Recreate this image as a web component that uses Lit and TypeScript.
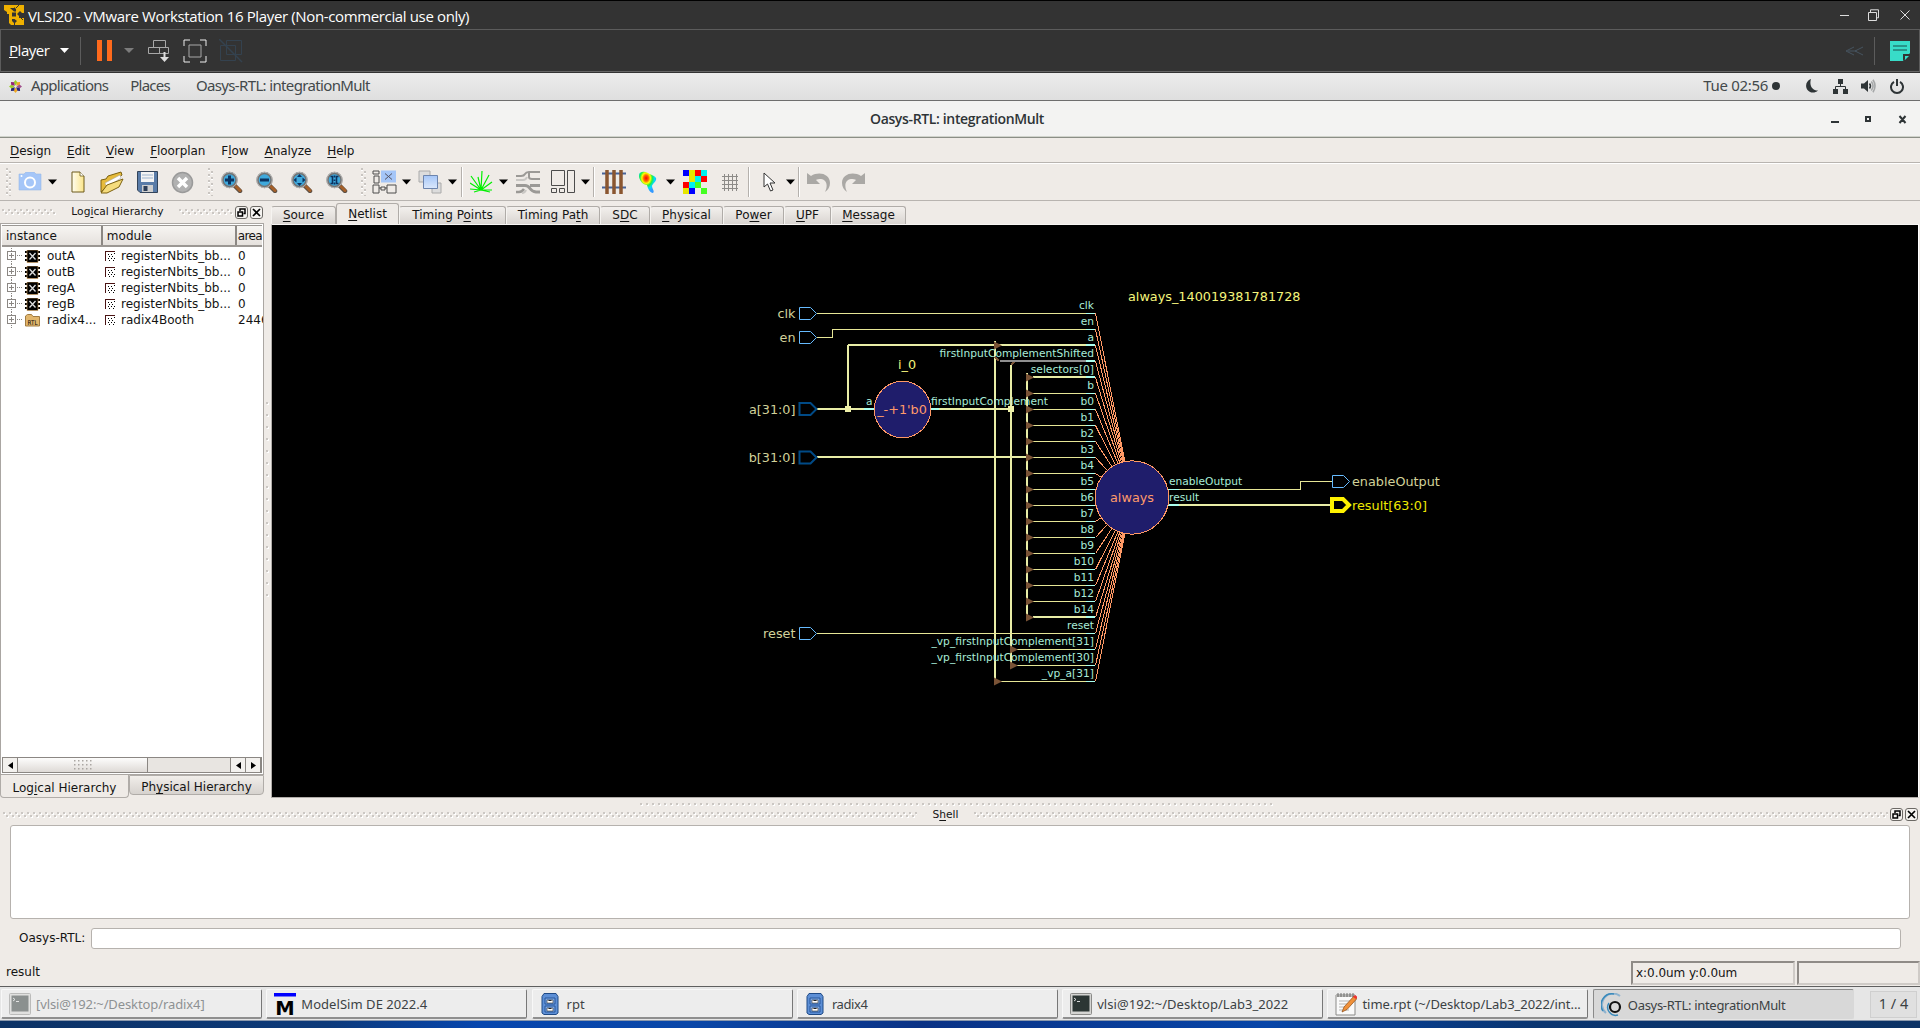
import { LitElement, html, svg, css, nothing } from "lit";
import { customElement } from "lit/decorators.js";
import { styleMap } from "lit/directives/style-map.js";

/* Menu label with its mnemonic letter, marked by "&", underlined. */
const mn = (s: string) => {
  const i = s.indexOf("&");
  if (i < 0) return html`${s}`;
  return html`${s.slice(0, i)}<u>${s[i + 1]}</u>${s.slice(i + 2)}`;
};

/* Grip dots; two staggered rows when the strip is tall enough. */
const grip = (w: number, h: number) => html`<svg class="grip" width=${w} height=${h} shape-rendering="crispEdges">
  <defs>
    <pattern id="g" width="6" height=${w > h ? 12 : 6} patternUnits="userSpaceOnUse">
      <rect x="1" y="1" width="2" height="2" fill="#fff" /><rect x="0" y="0" width="2" height="2" fill="#cbc7c3" />
      ${h > 3 && w > 3
        ? svg`<rect x="4" y="4" width="2" height="2" fill="#fff" /><rect x="3" y="3" width="2" height="2" fill="#cbc7c3" />`
        : nothing}
    </pattern>
  </defs>
  <rect width=${w} height=${h} fill="url(#g)" />
</svg>`;

@customElement("vm-bar")
class VmBar extends LitElement {
  static styles = css`
    :host { display: block; height: 73px; background: #333; color: #fff; font: 15px/18px "Open Sans", "Noto Sans", sans-serif; box-sizing: border-box; border-top: 1px solid #000; }
    .title { display: flex; align-items: center; height: 28px; padding: 0 10px 0 4px; border-bottom: 1px solid #5c5c5c; }
    .name { margin: 1px 0 0 4px; letter-spacing: -0.36px; flex: 1; white-space: nowrap; }
    .wins { display: flex; gap: 21px; }
    .min { margin-right: -2px; }
    .tools { display: flex; align-items: center; height: 42px; border-left: 1px solid #5c5c5c; border-right: 1px solid #5c5c5c; border-bottom: 1px solid #666; box-sizing: border-box; padding: 0 9px 0 8px; }
    .player { letter-spacing: -0.45px; margin-bottom: 2px; }
    .sep { width: 1px; height: 28px; background: #5c5c5c; }
    .left, .right { display: flex; align-items: center; }
    .left { flex: 1; }
    .a1 { margin: 0 11px 0 10px; } .a2 { margin: 0 14px 0 12px; }
    .pause { margin-left: 16px; }
    .fs { margin-left: 13px; } .un { margin-left: 12px; }
    .note { margin-left: 15px; } .rsep { margin-left: 10px; }
  `;
  render() {
    return html`
      <div class="title">
        <svg width="20" height="20" viewBox="0 0 20 20" fill="#eeb000">
          <path d="M0 0h10v3H6l4 3.500h2V4l-2-2V0h10v8h-2l-2-2-3 3 2 2v2h5v7h-9v-2l2-2-2.500-2H8v2l2 2v2H7l-2-2V9H3V7L0 5z" />
          <path d="M8 7.500h4v4H8z" fill="#333" /><path d="M12 3l3-3M15 11l4 4" stroke="#333" />
        </svg>
        <span class="name">VLSI20 - VMware Workstation 16 Player (Non-commercial use only)</span>
        <span class="wins">
          <svg class="min" width="9" height="12" stroke="#ddd"><path d="M0 6.500h9" /></svg>
          <svg width="11" height="12" stroke="#ddd" fill="none"><path d="M.5 3.500h8v8h-8zM2.500 3V.8h8v8H9" /></svg>
          <svg width="10" height="12" stroke="#ddd"><path d="M.5 1.500l9 9M9.500 1.500l-9 9" /></svg>
        </span>
      </div>
      <div class="tools">
        <div class="left">
          <span class="player">${mn("&Player")}</span>
          <svg class="a1" width="9" height="5" fill="#fff"><path d="M0 0h9L4.500 5z" /></svg>
          <span class="sep"></span>
          <svg class="pause" width="15" height="21" fill="#ff6a1c"><path d="M0 0h5v21H0zM10 0h5v21h-5z" /></svg>
          <svg class="a2" width="10" height="5" fill="#7c7c7c"><path d="M0 0h10L5 5z" /></svg>
          <svg width="22" height="22" fill="none" stroke="#a8a8a8">
            <path d="M5.500.5h12v7h-12zM.5 7.500h11v6H.5zM11.500 7.500h9v6h-9z" /><path d="M16.500 12v7" stroke="#ddd" stroke-width="2" /><path d="M12 17h9l-4.500 5z" fill="#ddd" stroke="none" />
          </svg>
          <svg class="fs" width="24" height="24" fill="none"><path d="M1 7V1h6M17 1h6v6M23 17v6h-6M7 23H1v-6" stroke="#eee" /><path d="M6 6h12v12H6z" stroke="#a8a8a8" /></svg>
          <svg class="un" width="24" height="24" fill="none" stroke="#34424f"><path d="M1.500 6.500h15v15h-15zM7.500 1.500h15v14h-15z" /><path d="M0 0l23 23" stroke-width="1.500" /></svg>
        </div>
        <div class="right">
          <svg width="19" height="10" fill="none" stroke="#465460"><path d="M9 1L1 5l8 4M18 1l-8 4 8 4M3 5h9" /></svg>
          <span class="sep rsep"></span>
          <svg class="note" width="20" height="20"><path d="M0 0h20v12l-7 8H0z" fill="#38dcc8" /><path d="M3 5h14M3 9h14" stroke="#237d76" stroke-width="1.500" /><path d="M13 20v-7h7z" fill="#333" /><path d="M15 19v-4h4z" fill="#38dcc8" /></svg>
        </div>
      </div>`;
  }
}

@customElement("gnome-bar")
class GnomeBar extends LitElement {
  static styles = css`
    :host { display: flex; align-items: center; height: 28px; box-sizing: border-box; border-bottom: 1px solid #6e6e6e; background: linear-gradient(#ececec, #dfdfdf); color: #43494b; font: 15px/18px "Noto Sans", "Open Sans", sans-serif; padding: 0 16px 0 9px; white-space: nowrap; }
    .m, .app, .clock { margin-top: -3px; }
    .m { letter-spacing: -0.75px; }
    .apps { margin-left: 9px; } .places { margin-left: 22px; } .app { margin-left: 26px; letter-spacing: -0.65px; flex: 1; }
    .clock { letter-spacing: -0.3px; }
    .dot { width: 8px; height: 8px; border-radius: 50%; background: #2e3436; margin: 0 0 2px 4px; }
    svg { margin-bottom: 1px; }
    .moon { margin-left: 26px; } .net { margin-left: 15px; } .vol { margin-left: 13px; } .pow { margin-left: 14px; }
  `;
  render() {
    const petals = ["#9ccd2a", "#efa724", "#a14f8c", "#262577", "#efa724", "#262577", "#9ccd2a", "#932279"];
    return html`
      <svg width="13" height="13" viewBox="-6.500 -6.500 13 13">
        ${petals.map((c, i) => svg`<path d="M0-1l2-3-2-2.500-2 2.500z" fill=${c} transform="rotate(${i * 45})" />`)}
      </svg>
      <span class="m apps">Applications</span><span class="m places">Places</span><span class="app">Oasys-RTL: integrationMult</span>
      <span class="clock">Tue 02:56</span><span class="dot"></span>
      <svg class="moon" width="12" height="14" fill="#2e3436"><path d="M5 0C3 6 6 11.500 12 11.500 9 14.500 4 14 2 11.500-1.500 8 0 1.500 5 0z" /></svg>
      <svg class="net" width="15" height="15" fill="#2e3436"><path d="M5 0h5v5H5zM0 10h5v5H0zM10 10h5v5h-5z" /><path d="M7.500 4v4M2.500 11V7.500h10V11" fill="none" stroke="#2e3436" /></svg>
      <svg class="vol" width="15" height="14" fill="none"><path d="M0 4.500h3L7 1v12L3 9.500H0z" fill="#2e3436" /><path d="M8.500 4.500q2 2.500 0 5" stroke="#2e3436" stroke-width="1.500" /><path d="M10.300 2.500q3.500 4.500 0 9M12 .8q4 6.200 0 12.400" stroke="#a6a8a9" stroke-width="1.600" /></svg>
      <svg class="pow" width="14" height="15" fill="none" stroke="#2e3436" stroke-width="2"><path d="M4 2.800a6 6 0 1 0 6 0M7 0v7" /></svg>`;
  }
}

@customElement("netlist-view")
class NetlistView extends LitElement {
  static styles = css`
    :host { display: block; background: #000; }
    svg { display: block; font-family: "DejaVu Sans", sans-serif; }
    .pin { fill: #a9ecd9; font-size: 10.670px; }
    .end { text-anchor: end; }
    .port { fill: #d2d29a; font-size: 12.800px; }
    .name { fill: #f5f57c; font-size: 12.800px; }
    .hot { fill: #f0e800; font-size: 12.800px; }
    .op { fill: #ff9a6a; font-size: 12.800px; text-anchor: middle; }
    .thin { stroke: #e6e696; fill: none; }
    .bus { stroke: #e8eda6; stroke-width: 2; fill: none; }
    .cy { stroke: #aaffee; fill: none; }
    .cy2 { stroke: #aaffee; stroke-width: 2; fill: none; }
    .gray { stroke: #8f8f8f; }
    .fan { stroke: #ff9966; fill: none; }
    .node { fill: #1f1d6b; stroke: #ff9966; }
    .tri { fill: #7a5336; }
    .in { fill: #000; stroke: #66bbff; }
    .inb { fill: #000; stroke: #004a86; stroke-width: 2; }
    .outb { fill: #000; stroke: #fff200; stroke-width: 4; }
  `;
  private pins = ["clk", "en", "a", "firstInputComplementShifted", "selectors[0]", "b", "b0", "b1", "b2", "b3", "b4", "b5", "b6", "b7", "b8", "b9", "b10", "b11", "b12", "b14", "reset", "_vp_firstInputComplement[31]", "_vp_firstInputComplement[30]", "_vp_a[31]"];
  private port(x: number, y: number, cls: string) {
    return svg`<path class=${cls} d="M${x} ${y - 6}h11l6 6-6 6h-11z" />`;
  }
  private tri(x: number, y: number) {
    return svg`<path class="tri" d="M${x} ${y - 4}l8 4-8 4z" />`;
  }
  private pin(label: string, i: number) {
    const y = 313.5 + 16 * i;
    const thick = [2, 3, 4, 19].includes(i);
    const ly = thick ? y - 0.5 : y;
    let x0 = 1033;
    if (i === 0 || i === 20) x0 = 817;
    if (i === 1) x0 = 832;
    if (i === 2) x0 = 848;
    if (i === 3) x0 = 1000;
    if (i === 21 || i === 22) x0 = 1017;
    if (i === 23) x0 = 1001;
    return svg`
      <path class="${thick ? "bus" : "thin"} ${i === 3 ? "gray" : ""}" d="M${x0} ${ly}H1086" shape-rendering="crispEdges" />
      <path class=${thick ? "cy2" : "cy"} d="M1086 ${ly}H1095" shape-rendering="crispEdges" />
      <path class="fan" d="M1095.500 ${y}L1132 497.500" shape-rendering="crispEdges" />
      <text class="pin end" x="1094" y=${y - 4.5}>${label}</text>`;
  }
  render() {
    const taps = Array.from({ length: 16 }, (_, k) => 377 + 16 * k);
    return html`<svg width="1646" height="572" viewBox="272 225 1646 572">
      <g shape-rendering="crispEdges">
        <path class="thin" d="M817 337.500h15.500v-8" />
        <path class="bus" d="M817 409H866M848 409V345M939 409H1011M817 457H1027M995 341V681M1011 365V665M1027 373V617" />
        <path class="cy2" d="M864 409h11M930 409h9" />
        <path d="M845 406h6v6h-6zM1008 406h6v6h-6z" fill="#eef0a8" />
        <path d="M995 357l4 4M1011 365l4-4" stroke="#7a5336" stroke-width="2" />
      </g>
      ${this.pins.map((p, i) => this.pin(p, i))}
      ${taps.map((y) => this.tri(1026, y + 0.5))}
      ${this.tri(994, 345.5)}${this.tri(1010, 649.5)}${this.tri(1010, 665.5)}${this.tri(994, 681.5)}
      <g shape-rendering="crispEdges">
        <path class="thin" d="M1178 489.500H1300.500V481.500H1332" /><path class="cy" d="M1168 489.500h11" />
        <path class="bus" d="M1178 505H1332" /><path class="cy2" d="M1168 505h11" />
        <circle class="node" cx="1132" cy="497.500" r="36.700" />
        <circle class="node" cx="902.500" cy="409.500" r="28.200" />
      </g>
      ${this.port(799.5, 313.5, "in")}${this.port(799.5, 337.5, "in")}${this.port(799.5, 409, "inb")}${this.port(799.5, 457.5, "inb")}${this.port(799.5, 633.5, "in")}
      ${this.port(1332.5, 481.5, "in")}${this.port(1332, 505, "outb")}
      <text class="port end" x="795.500" y="318">clk</text>
      <text class="port end" x="795.500" y="342">en</text>
      <text class="port end" x="795.500" y="414">a[31:0]</text>
      <text class="port end" x="795.500" y="462">b[31:0]</text>
      <text class="port end" x="795.500" y="638">reset</text>
      <text class="port" x="1352" y="486">enableOutput</text>
      <text class="hot" x="1352" y="510">result[63:0]</text>
      <text class="name" x="898" y="369">i_0</text>
      <text class="name" x="1128" y="301">always_140019381781728</text>
      <text class="pin" x="866" y="405">a</text>
      <text class="pin" x="931" y="405">firstInputComplement</text>
      <text class="pin" x="1169" y="485">enableOutput</text>
      <text class="pin" x="1169" y="501">result</text>
      <text class="op" x="902" y="414">_-+1'b0</text>
      <text class="op" x="1132" y="502">always</text>
    </svg>`;
  }
}

const lens = (inner: unknown) => html`<svg width="22" height="22" viewBox="0 0 22 22">
  <path d="M13 14l6 6" stroke="#5b5046" stroke-width="4.500" stroke-linecap="round" /><path d="M15 15.500l4 4" stroke="#a5602a" stroke-width="3" stroke-linecap="round" />
  <circle cx="8.500" cy="9" r="7" fill="#3fa9dc" stroke="#747474" stroke-width="2.400" /><circle cx="8.500" cy="9" r="7.700" fill="none" stroke="#c4c4c4" stroke-width=".8" />
  ${inner}</svg>`;
const lensIn = lens(svg`<path d="M4 9h9M8.500 4.500v9" stroke="#0b3360" stroke-width="3" />`);
const lensOut = lens(svg`<path d="M4 9h9" stroke="#0b3360" stroke-width="3" />`);
const lensFit = lens(svg`<path d="M8.500 3l2.500 3H6zM8.500 15l2.500-3H6zM2.500 9l3-2.500v5zM14.500 9l-3-2.500v5z" fill="#0b3360" />`);
const lensSel = lens(svg`<path d="M4.500 5.500h2v7h-2M12.500 5.500h-2v7h2M8.500 4.500v2M8.500 8.500v1.500M8.500 11.500v2" fill="none" stroke="#0b3360" stroke-width="1.600" />`);
const dn = html`<svg width="9" height="6"><path d="M0 .5h9L4.500 5.500z" /></svg>`;
const handle = html`<svg width="6" height="28" shape-rendering="crispEdges">${[0, 1, 2, 3, 4].map((k) => svg`<path d="M0 ${k * 6}h2v2H0zM3 ${k * 6 + 3}h2v2H3z" fill="#c9c5c1" /><path d="M0 ${k * 6 + 2}h2v1H0zM3 ${k * 6 + 5}h2v1H3z" fill="#fff" />`)}</svg>`;
const camera = html`<svg width="24" height="20"><path d="M2 2h4l2-2h8l2 2h5v16H1V2z" fill="#a5c6f8" stroke="#98b8e6" stroke-width=".6" /><circle cx="12" cy="10.500" r="5" fill="none" stroke="#fff" stroke-width="2" /><circle cx="3.500" cy="4" r="1" fill="#fff" /></svg>`;
const blank = html`<svg width="14" height="22"><defs><linearGradient id="p"><stop stop-color="#fffdf0" /><stop offset="1" stop-color="#fbe58a" /></linearGradient></defs><path d="M1 1h8l4 4v16H1z" fill="url(#p)" stroke="#6d5a1c" /><path d="M9 1v4h4" fill="#fff" stroke="#6d5a1c" stroke-width=".8" /></svg>`;
const folder = html`<svg width="25" height="23"><path d="M1 21V9l5-1 2-3 13-4 1 3-12 9z" fill="#e6bb3c" stroke="#7c6110" /><path d="M5 12L20 4l1 3-14 9z" fill="#fff" stroke="#aaa" stroke-width=".6" /><path d="M1 22L7 14l16-6-4 8L7 22z" fill="#f5dc7d" stroke="#7c6110" /></svg>`;
const floppy = html`<svg width="21" height="22"><path d="M.5.500h20v21H3l-2.500-2.500z" fill="#5a7ca8" stroke="#33445a" /><path d="M4 1h13v10H4z" fill="#f4f4f4" /><path d="M5 4h11M5 7h11" stroke="#9db4cf" /><path d="M5 14h11v7H5z" fill="#cfcfcf" /><path d="M6.500 15h4v5h-4z" fill="#2c3d56" /></svg>`;
const stop = html`<svg width="23" height="23"><circle cx="11.500" cy="11.500" r="10" fill="#b1b1b1" stroke="#9a9a9a" stroke-width="1.500" /><path d="M7 7l9 9M16 7l-9 9" stroke="#fff" stroke-width="3.500" /></svg>`;
const floorplan = html`<svg width="25" height="24" fill="none" stroke="#4c4c4c"><path d="M9 .5h15v12H9z" fill="#a5c6f8" stroke="none" /><path d="M13 3.500l7 6M20 3.500l-7 6" stroke="#556" /><path d="M1 1h6v3H1zM2 6h5v7H2zM1 15h6v8H1zM15 15h9v8h-9zM9 17h4v3H9zM7 18h2M13 18h2" /></svg>`;
const squares = html`<svg width="25" height="24"><path d="M1 1h11v11H1zM14 13h9v10h-9z" fill="#dcdcdc" stroke="#aaa" /><defs><linearGradient id="q" x2="0" y2="1"><stop stop-color="#a5c6f8" /><stop offset="1" stop-color="#dbe8fb" /></linearGradient></defs><path d="M5.500 5.500h14v13h-14z" fill="url(#q)" stroke="#6c84ad" /></svg>`;
const fly = html`<svg width="23" height="22" stroke="#00f000" stroke-width="1.200"><path d="M11 19L1 5M11 19L8 6M11 19L12 0M11 19L19 4M11 19L22 11M11 19L0 12M11 19L0 18M11 19L22 19M11 19L4 21M11 19L20 21" /></svg>`;
const route = html`<svg width="24" height="24" fill="none" stroke="#9b9996" stroke-width="3"><path d="M0 6h5q3 0 4-2t4-2h11M13 2v5q0 2 3 2h8" stroke-width="2" /><path d="M0 10h7q3 0 4-3" stroke="#c9c7c4" stroke-width="2" /><path d="M0 15.500h9q3 0 5 3t6 3.500h4M14 15.500h10" /><path d="M0 22h3q3 0 5-3" stroke-width="2.500" /><path d="M6 23q3 0 4-3" stroke="#c9c7c4" stroke-width="2" /></svg>`;
const panes = html`<svg width="24" height="24" fill="none" stroke="#4c4c4c"><path d="M.5.500h13v15H.5zM16.500.500h7v22h-7zM.5 18.500h5v4h-5zM8.500 18.500h5v4h-5z" /></svg>`;
const rails = html`<svg width="24" height="24"><path d="M0 3.500h24M0 17.500h24" stroke="#466399" stroke-width="2" /><path d="M5 0v24M12 0v24M19 0v24" stroke="#8a5630" stroke-width="3.500" /></svg>`;
const heat = html`<svg width="19" height="22"><defs><radialGradient id="h" cx=".42" cy=".3" r=".65"><stop stop-color="#f00" /><stop offset=".22" stop-color="#f60" /><stop offset=".38" stop-color="#ff0" /><stop offset=".55" stop-color="#2e4" /><stop offset=".75" stop-color="#0df" /><stop offset="1" stop-color="#39f" /></radialGradient></defs><path d="M0 6C-1 0 5 0 9 2c3 2 6 2 8 5 1 3-3 5-4 8 0 3 3 5 1 7-3 0-5-4-6-8C4 14 1 10 0 6z" fill="url(#h)" /></svg>`;
const MOSAIC: [string, number, number][] = [
  ["#00f", 0, 0], ["#e6e600", 1, 0], ["#f00", 2, 0], ["#00f0f0", 3, 0], ["#e6e600", 1, 1], ["#00f0f0", 2, 1], ["#f00", 3, 1],
  ["#f00", 0, 2], ["#00f0f0", 1, 2], ["#44ff22", 2, 2], ["#e6e600", 0, 3], ["#00f", 1, 3], ["#44ff22", 3, 3],
];
const mosaic = html`<svg width="24" height="24" shape-rendering="crispEdges">${MOSAIC.map(([c, x, y]) => svg`<rect x=${x * 6} y=${y * 6} width="6" height="6" fill=${c} />`)}</svg>`;
const mesh = html`<svg width="16" height="17" stroke="#8d8b88"><path d="M0 2.500h16M0 6.500h16M0 10.500h16M0 14.500h16M2.500 0v17M6.500 0v17M10.500 0v17M14.500 0v17" shape-rendering="crispEdges" /></svg>`;
const cursor = html`<svg width="13" height="20"><path d="M1 1v14l3.500-3 3 7 2.500-1-3-7h5z" fill="#fff" stroke="#333" /></svg>`;
const undo = html`<svg width="24" height="21"><path d="M0 1l4 3C12-1 23 2 23 11c0 4-2 7-5 9 3-6 2-12-4-13-2 0-4 0-5 1l4 4H0z" fill="#aaa8a5" /></svg>`;
const redo = html`<svg width="24" height="21"><path transform="matrix(-1 0 0 1 24 0)" d="M0 1l4 3C12-1 23 2 23 11c0 4-2 7-5 9 3-6 2-12-4-13-2 0-4 0-5 1l4 4H0z" fill="#aaa8a5" /></svg>`;

/* Toolbar entries: gap before, then the drawing. */
const sep = html`<span class="vsep"></span>`;
const BAR: [number, unknown][] = [
  [6, handle], [6, camera], [6, dn], [14, blank], [15, folder], [12, floppy], [13, stop], [14, handle],
  [7, lensIn], [13, lensOut], [13, lensFit], [13, lensSel], [13, handle],
  [5, floorplan], [5, dn], [7, squares], [5, dn], [4, sep], [7, fly], [6, dn], [8, route], [11, panes], [6, dn], [3, sep],
  [7, rails], [13, heat], [8, dn], [8, mosaic], [15, mesh], [10, sep], [13, cursor], [10, dn], [3, sep], [7, undo], [10, redo],
];

const chip = html`<svg width="15" height="13"><path d="M0 1h3v2H0zM0 5h3v2H0zM0 9h3v2H0zM12 1h3v2h-3zM12 5h3v2h-3zM12 9h3v2h-3z" /><path d="M2 0h11v12.500H2z" stroke="#d9a35c" stroke-width=".6" /><path d="M4.500 3l6 6.500M10.500 3l-6 6.500" stroke="#ddd" stroke-width="1.300" /></svg>`;
const rtl = html`<svg width="15" height="13"><path d="M.5 12V2l2-1.500h4L8 2.500h6.500V12z" fill="#e2b66c" stroke="#a17c43" /><text x="2.500" y="10.500" font-size="6.500" font-family="DejaVu Sans" textLength="10" lengthAdjust="spacingAndGlyphs">RTL</text></svg>`;
const mod = html`<svg width="10" height="10" shape-rendering="crispEdges"><path d="M.5 10V.5H10" fill="none" stroke="#4a1414" /><path d="M3 3h1v1H3zM6 3h1v1H6zM9 2h1v1H9zM4 5h1v1H4zM7 5h1v1H7zM3 7h1v1H3zM6 7h1v1H6zM9 7h1v1H9zM4 9h1v1H4zM8 9h1v1H8z" /></svg>`;
const ROWS: [string, string, string][] = [
  ["outA", "registerNbits_bb...", "0"], ["outB", "registerNbits_bb...", "0"], ["regA", "registerNbits_bb...", "0"], ["regB", "registerNbits_bb...", "0"], ["radix4...", "radix4Booth", "2446"],
];
const TABS: [string, number][] = [["&Source", 65], ["&Netlist", 63], ["Timing P&oints", 107], ["Timing Pa&th", 94], ["S&DC", 50], ["&Physical", 73], ["Po&wer", 61], ["&UPF", 47], ["&Message", 75]];

@customElement("oasys-window")
class OasysWindow extends LitElement {
  static styles = css`
    :host { display: flex; flex-direction: column; height: 885px; background: #efebe7; font: 12px/16px "DejaVu Sans", sans-serif; color: #141414; white-space: nowrap; }
    svg { display: block; flex: none; }
    u { text-underline-offset: 2px; text-decoration-thickness: 1px; }
    .title { display: flex; align-items: center; height: 37px; box-sizing: border-box; border-bottom: 1px solid #8b8e86; box-shadow: inset 0 -1px #d0d3cc; background: #f3f3f2; padding-right: 13px; }
    .tname { flex: 1; text-align: center; font: 600 14px/18px "Open Sans", "Noto Sans", sans-serif; color: #2e3436; padding-left: 83px; letter-spacing: -0.35px; }
    .menu { display: flex; height: 25px; box-sizing: border-box; border-bottom: 1px solid #b8b4b0; padding: 1px 0 0 10px; gap: 16px; line-height: 25px; letter-spacing: -0.07px; }
    .tools { display: flex; align-items: center; height: 38px; box-sizing: border-box; border-top: 1px solid #fff; border-bottom: 1px solid #b8b4b0; }
    .vsep { display: block; width: 1px; height: 30px; background: #b5b1ad; border-right: 1px solid #fff; }
    .mid { display: flex; height: 598px; }
    .dock { width: 264px; display: flex; flex-direction: column; }
    .dtitle { display: flex; align-items: center; height: 22px; padding: 0 1px 0 2px; gap: 2px; box-sizing: border-box; }
    .dname { flex: 1; text-align: center; font-size: 10.670px; }
    .btn { width: 13px; height: 13px; box-sizing: border-box; border: 1px solid #6c6965; border-radius: 3px; display: grid; place-items: center; background: #f5f3f0; }
    .tree { flex: 1; border: 1px solid #aaa6a2; background: #fff; display: flex; flex-direction: column; overflow: hidden; padding: 1px; }
    .head { display: flex; height: 22px; background: linear-gradient(#f7f5f2, #e5e1dd); border-bottom: 2px solid #9b9793; border-top: 1px solid #9b9793; box-sizing: border-box; line-height: 20px; }
    .head span { box-sizing: border-box; padding-left: 4px; }
    .head .h1 { width: 101px; border-right: 2px solid #8b8783; } .head .h2 { width: 134px; border-right: 2px solid #8b8783; } .head .h3 { padding-left: 1px; letter-spacing: -0.6px; }
    .rows { flex: 1; padding-top: 1px; }
    .row { display: flex; align-items: center; height: 16px; }
    .row span { box-sizing: border-box; flex: none; }
    .exp { width: 23px; padding-left: 4px; }
    .inst { width: 65px; padding-left: 7px; }
    .mod { width: 123px; padding-left: 6px; }
    .scroll { display: flex; height: 16px; border: 1px solid #8b8783; box-sizing: border-box; background: #e8e5e1; }
    .sb { width: 15px; display: grid; place-items: center; background: #f3f1ee; border-right: 1px solid #8b8783; box-sizing: border-box; }
    .thumb { width: 129px; background: linear-gradient(#fdfdfc, #dedad6); border-right: 1px solid #8b8783; display: grid; place-items: center; }
    .track { flex: 1; border-right: 1px solid #8b8783; }
    .btabs { display: flex; height: 24px; align-items: flex-start; }
    .bt { box-sizing: border-box; text-align: center; border: 1px solid #b0aca8; border-top: 0; border-radius: 0 0 4px 4px; }
    .bt1 { width: 129px; height: 23px; line-height: 27px; }
    .bt2 { width: 135px; height: 20px; line-height: 22px; background: linear-gradient(#f1eeea, #d6d2ce); border-top: 1px solid #b0aca8; }
    .vsplit { width: 7px; display: grid; place-items: center; }
    .view { flex: 1; display: flex; flex-direction: column; }
    .tabs { display: flex; height: 23px; align-items: flex-end; padding-top: 1px; box-sizing: border-box; }
    .tab { height: 18px; line-height: 16px; text-align: center; box-sizing: border-box; border: 1px solid #b0aca8; border-left-color: #f6f4f1; border-bottom: 0; background: linear-gradient(#f3f0ed, #d9d5d1); border-radius: 3px 3px 0 0; }
    .on { height: 21px; line-height: 20px; background: #efebe7; border-left-color: #b0aca8; }
    .canvas { border: 1px solid #b0aca8; border-right: 1px solid #fff; border-top-color: #f8f6f4; height: 572px; margin-right: 1px; }
    .hsplit { height: 7px; display: grid; justify-items: center; align-items: end; padding-right: 4px; }
    .stitle { display: flex; align-items: center; height: 17px; gap: 2px; padding: 0 2px 0 3px; }
    .sname { width: 53px; text-align: center; font-size: 10.670px; }
    .fill { flex: 1; overflow: hidden; }
    .out { height: 94px; margin: 2px 10px 0; border: 1px solid #b6b2ae; border-radius: 3px; background: #fff; box-sizing: border-box; }
    .cmd { display: flex; align-items: center; height: 22px; margin: 8px 19px 0 19px; gap: 6px; }
    .in { flex: 1; height: 21px; border: 1px solid #b6b2ae; border-radius: 3px; background: #fff; box-sizing: border-box; }
    .status { flex: 1; display: flex; align-items: flex-end; padding: 0 0 1px 6px; gap: 2px; }
    .msg { flex: 1; margin-bottom: 5px; }
    .cell { box-sizing: border-box; height: 24px; border: 2px solid; border-color: #8f8b87 #cfcbc7 #cfcbc7 #8f8b87; line-height: 21px; padding-left: 3px; }
    .c1 { width: 164px; letter-spacing: -0.05px; } .c2 { width: 123px; }
  `;
  private btns() {
    return html`<span class="btn"><svg width="9" height="9" fill="none" stroke="#000"><path d="M3 3V1h5v4.500H6.500" stroke-width="1.500" /><path d="M1 4h4.500v4H1z" stroke-width="1.500" /></svg></span>
      <span class="btn"><svg width="9" height="9" stroke="#000" stroke-width="1.700"><path d="M1 1l7 7M8 1L1 8" /></svg></span>`;
  }
  render() {
    return html`
      <div class="title">
        <span class="tname">Oasys-RTL: integrationMult</span>
        <svg width="76" height="12" fill="none" stroke="#2e3436" stroke-width="2"><path d="M0 9h8M35 4h4v4h-4zM68.500 3l6 7M74.500 3l-6 7" /></svg>
      </div>
      <div class="menu">${["&Design", "&Edit", "&View", "&Floorplan", "F&low", "&Analyze", "&Help"].map((m) => html`<span>${mn(m)}</span>`)}</div>
      <div class="tools">${BAR.map(([gap, d]) => html`<span style=${styleMap({ marginLeft: gap + "px" })}>${d}</span>`)}</div>
      <div class="mid">
        <div class="dock">
          <div class="dtitle">${grip(54, 6)}<span class="dname">${mn("Log&ical Hierarchy")}</span>${grip(54, 6)}${this.btns()}</div>
          <div class="tree">
            <div class="head"><span class="h1">instance</span><span class="h2">module</span><span class="h3">area</span></div>
            <div class="rows">${ROWS.map(([a, b, c], i) => html`<div class="row">
              <span class="exp"><svg width="18" height="16" fill="none" stroke="#8b8783" shape-rendering="crispEdges"><path d="M1.500 3.500h8v8h-8zM3 7.500h5M5.500 5v5" /><path d="M11 7.500h6M5.500 0v3M5.500 13v3" stroke-dasharray="1 1" /></svg></span>
              ${i === 4 ? rtl : chip}<span class="inst">${a}</span>${mod}<span class="mod">${b}</span><span>${c}</span></div>`)}</div>
            <div class="scroll">
              <span class="sb"><svg width="5" height="7"><path d="M5 0v7L0 3.500z" /></svg></span>
              <span class="thumb"><svg width="18" height="10" fill="#aaa6a2">${[0, 1, 2].map((r) => [0, 1, 2, 3, 4].map((c) => svg`<rect x=${c * 4} y=${r * 4} width="1.500" height="1.500" />`))}</svg></span>
              <span class="track"></span>
              <span class="sb"><svg width="5" height="7"><path d="M5 0v7L0 3.500z" /></svg></span>
              <span class="sb"><svg width="5" height="7"><path d="M0 0v7l5-3.500z" /></svg></span>
            </div>
          </div>
          <div class="btabs"><span class="bt bt1">${mn("Log&ical Hierarchy")}</span><span class="bt bt2">${mn("Ph&ysical Hierarchy")}</span></div>
        </div>
        <div class="vsplit">${grip(3, 196)}</div>
        <div class="view">
          <div class="tabs">${TABS.map(([t, w], i) => html`<span class="tab ${i === 1 ? "on" : ""}" style=${styleMap({ width: w + "px" })}>${mn(t)}</span>`)}</div>
          <div class="canvas"><netlist-view></netlist-view></div>
        </div>
      </div>
      <div class="hsplit">${grip(636, 3)}</div>
      <div class="stitle"><span class="fill">${grip(920, 6)}</span><span class="sname">${mn("S&hell")}</span><span class="fill">${grip(930, 6)}</span>${this.btns()}</div>
      <div class="out"></div>
      <div class="cmd"><span>Oasys-RTL:</span><span class="in"></span></div>
      <div class="status"><span class="msg">result</span><span class="cell c1">x:0.0um y:0.0um</span><span class="cell c2"></span></div>`;
  }
}

const term = html`<svg width="22" height="22"><rect x=".5" y=".5" width="21" height="21" rx="1" fill="#d4d4d2" stroke="#8b8b89" /><rect x="2.500" y="2.500" width="17" height="16" fill="#2c3634" /><path d="M4 5l2 1.500L4 8M7 8.500h3" fill="none" stroke="#eee" stroke-width=".9" /></svg>`;
const cabinet = html`<svg width="22" height="22" viewBox="-1 0 22 22"><path d="M3 .5h12l2 3V20l-2 1.500H3L1 20V3.500z" fill="#5d8fd6" stroke="#1f4a86" /><path d="M4 5h10v6H4zM4 13h10v6H4z" fill="#7ba7e4" stroke="#28569a" /><path d="M6 7h6v3H6zM6 15h6v3H6z" fill="#fff" stroke="#333" stroke-width=".6" /><path d="M7.500 7.500h3M7.500 15.500h3" stroke="#222" /></svg>`;
const modelsim = html`<svg width="22" height="24"><path d="M0 1h22v3.500H0z" fill="#00f" /><text x="11" y="23" text-anchor="middle" font-family="DejaVu Sans" font-weight="700" font-size="19.500">M</text></svg>`;
const edit = html`<svg width="22" height="23"><path d="M1 2h19v20H1z" fill="#fafafa" stroke="#8a8a88" /><path d="M1 1h19v3H1z" fill="#b9b9b7" /><path d="M3 0v4M6 0v4M9 0v4M12 0v4M15 0v4M18 0v4" stroke="#555" stroke-width=".8" /><path d="M4 8h12M4 11h9M4 14h8M4 17h10" stroke="#b5b5b3" /><path d="M7 19l2-5 10-11 3 2.500-10 11z" fill="#f0913a" stroke="#8c4a12" stroke-width=".7" /><path d="M18 4l2-2 2.500 2-1.500 2z" fill="#e33" /></svg>`;
const oasys = html`<svg width="22" height="24" fill="none"><circle cx="14" cy="14" r="5" stroke="#111" stroke-width="2.200" /><path d="M19 3A10.500 10.500 0 0 0 5 20" stroke="#8fb3cf" stroke-width="2" /><path d="M13 1A11 11 0 0 0 2 18M8 10a8 8 0 0 0 9 12" stroke="#3a8abb" stroke-width="1.500" /></svg>`;

@customElement("task-bar")
class TaskBar extends LitElement {
  static styles = css`
    :host { display: block; height: 42px; font: 13px/18px "Noto Sans", "Open Sans", sans-serif; color: #3c4244; }
    svg { display: block; flex: none; }
    .bar { display: flex; height: 35px; box-sizing: border-box; border-top: 1px solid #5f5f5f; background: #e6e6e6; padding: 2px 3px 1px 1px; border-bottom: 1px solid #8b98ac; gap: 4.300px; }
    .b { display: flex; align-items: center; gap: 5px; width: 261px; flex: none; box-sizing: border-box; padding: 1px 6px 0 7px; background: #ededed; border: 1px solid #f8f8f8; border-right: 1px solid #777; border-bottom: 2px solid #8f8f8f; border-radius: 2px; }
    .t { white-space: nowrap; }
    .dim { color: #8d9193; } .dim svg { opacity: 0.5; }
    .on { background: #d8d8d8; border-color: #8a8a8a #d8d8d8 #d8d8d8 #8a8a8a; border-width: 1px; }
    .ws { margin: 2px 0 1px auto; width: 47px; box-sizing: border-box; border: 1px solid #cfcfcf; text-align: center; line-height: 23px; font-size: 14.500px; background: #e0e0e0; }
    .desk { height: 7px; background: linear-gradient(90deg, #0c3265, #0d3a7a 17%, #0746ae 25%, #0a47a8 36%, #0a3285 48%, #0745a8 66%, #0a3570 80%, #0c3265); }
  `;
  render() {
    /* icon, label, tracking in px, state */
    const items: [unknown, string, number, string][] = [
      [term, "[vlsi@192:~/Desktop/radix4]", -0.1, "dim"], [modelsim, "ModelSim DE 2022.4", 0.05, ""], [cabinet, "rpt", 0, ""], [cabinet, "radix4", -0.4, ""],
      [term, "vlsi@192:~/Desktop/Lab3_2022", 0.05, ""], [edit, "time.rpt (~/Desktop/Lab3_2022/int...", -0.06, ""], [oasys, "Oasys-RTL: integrationMult", -0.3, "on"],
    ];
    return html`<div class="bar">${items.map(([i, t, ls, c]) => html`<div class="b ${c}">${i}<span class="t" style=${styleMap({ letterSpacing: ls + "px" })}>${t}</span></div>`)}<div class="ws">1 / 4</div></div><div class="desk"></div>`;
  }
}

@customElement("app-root")
class AppRoot extends LitElement {
  static styles = css`
    :host { display: flex; flex-direction: column; width: 1920px; height: 1028px; overflow: hidden; }
  `;
  render() {
    return html`<vm-bar></vm-bar><gnome-bar></gnome-bar><oasys-window></oasys-window><task-bar></task-bar>`;
  }
}
